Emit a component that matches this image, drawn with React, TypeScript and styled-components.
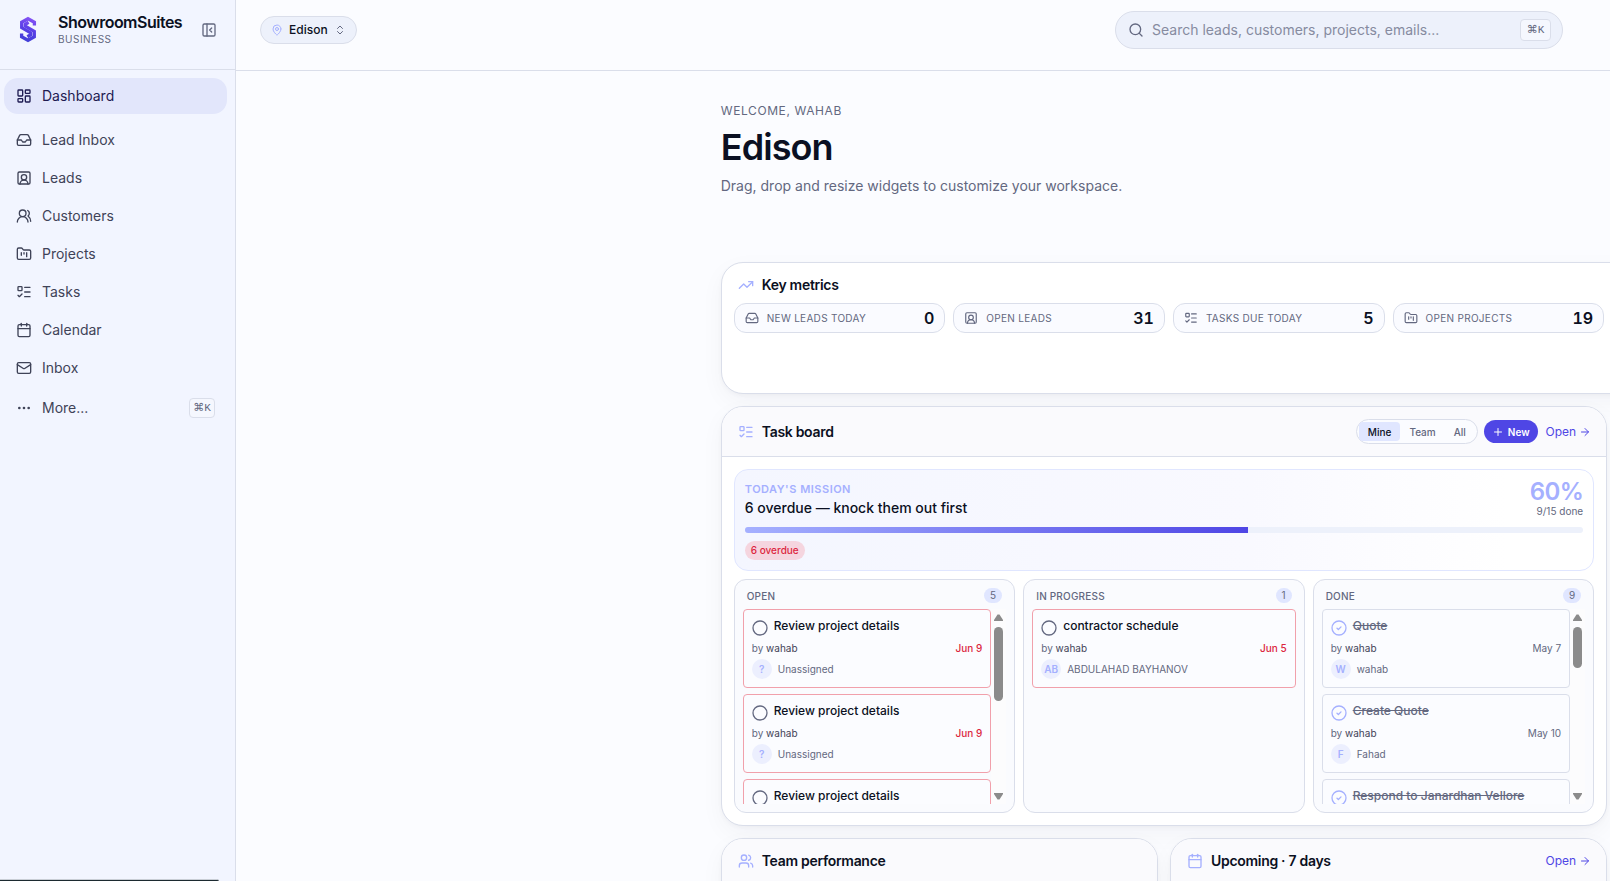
import React from "react";
import styled, { createGlobalStyle, css } from "styled-components";
import {
  ArrowRight,
  Calendar,
  ChevronsUpDown,
  Ellipsis,
  FolderKanban,
  Inbox,
  LayoutDashboard,
  ListTodo,
  Mail,
  MapPin,
  PanelLeftClose,
  Plus,
  Search,
  SquareUserRound,
  TrendingUp,
  Users,
  UsersRound,
  type LucideIcon,
} from "lucide-react";

const color = {
  page: "#fbfcff",
  side: "#f2f5ff",
  line: "#dadeea",
  ink: "#0b1022",
  text: "#3f4358",
  muted: "#636880",
  accent: "#4f46e5",
  soft: "#a5b0ff",
  tint: "#e0e6ff",
  field: "#edf1fb",
  danger: "#dc2640",
};

const GlobalStyle = createGlobalStyle`
  *, *::before, *::after { box-sizing: border-box; }
  body {
    margin: 0;
    background: ${color.page};
    color: ${color.ink};
    font-family: Inter, "Liberation Sans", sans-serif;
    font-size: 14px;
    line-height: 20px;
  }
  button, input { font: inherit; color: inherit; }
  button { padding: 0; border: 0; background: none; cursor: pointer; }
  h1, h2, h3, p, ul { margin: 0; padding: 0; }
  ul { list-style: none; }
  a { color: inherit; text-decoration: none; }
  svg { flex: none; display: block; }
`;

const Shell = styled.div`
  display: flex;
  height: 100vh;
  overflow: hidden;
`;

/* Sidebar */

const Sidebar = styled.aside`
  flex: none;
  width: 236px;
  background: ${color.side};
  border-right: 1px solid ${color.line};
`;

const Brand = styled.div`
  display: flex;
  align-items: flex-start;
  height: 70px;
  padding: 12px 18px 0 19px;
  border-bottom: 1px solid ${color.line};
`;

const LogoBox = styled.div`
  width: 39px;
  padding-top: 4px;
`;

const BrandText = styled.div`
  flex: 1;
`;

const BrandName = styled.div`
  font-size: 16px;
  font-weight: 600;
  letter-spacing: -0.5px;
  line-height: 20px;
`;

const BrandKind = styled.div`
  font-size: 10px;
  letter-spacing: 0.5px;
  line-height: 14px;
  color: ${color.muted};
`;

const CollapseButton = styled.button`
  margin-top: 10px;
  color: ${color.muted};
`;

const NavList = styled.ul`
  display: flex;
  flex-direction: column;
  gap: 2px;
  padding: 8px 8px 0 4px;
`;

const NavRow = styled.li<{ $after?: number }>`
  margin-bottom: ${(p) => p.$after ?? 0}px;
`;

const NavLink = styled.a<{ $active?: boolean }>`
  display: flex;
  align-items: center;
  gap: 10px;
  height: 36px;
  padding: 0 12px;
  border-radius: 14px;
  color: ${color.text};
  ${(p) =>
    p.$active &&
    css`
      background: #e2e6fb;
      color: #1e1b52;
    `}
`;

const NavLabel = styled.span`
  flex: 1;
`;

const Kbd = styled.kbd<{ $wide?: boolean }>`
  display: flex;
  align-items: center;
  justify-content: center;
  width: ${(p) => (p.$wide ? 31 : 26)}px;
  height: ${(p) => (p.$wide ? 22 : 20)}px;
  border: 1px solid ${color.line};
  border-radius: 4px;
  background: #f5f7fe;
  color: ${color.muted};
  font-family: "Liberation Mono", "DejaVu Sans", monospace;
  font-size: 11px;
`;

const StatusBubble = styled.div`
  position: fixed;
  left: 0;
  bottom: 0;
  width: 219px;
  height: 2px;
  border-top: 1px solid #c9ced6;
  border-top-right-radius: 2px;
  background: #1c2a30;
`;

/* Main area */

const Main = styled.main`
  flex: 1;
  min-width: 0;
  overflow: hidden;
`;

const TopBar = styled.header`
  display: flex;
  align-items: center;
  justify-content: space-between;
  padding: 11px 47px 21px 24px;
  border-bottom: 1px solid ${color.line};
`;

const LocationButton = styled.button`
  display: flex;
  align-items: center;
  gap: 6px;
  height: 28px;
  padding: 0 10px;
  border: 1px solid ${color.line};
  border-radius: 14px;
  background: ${color.field};
  font-size: 12px;
  font-weight: 500;
  svg:first-child { color: ${color.soft}; }
  svg:last-child { color: ${color.muted}; }
`;

const SearchBox = styled.label`
  display: flex;
  align-items: center;
  gap: 8px;
  width: 448px;
  height: 38px;
  padding: 0 11px 0 12px;
  border: 1px solid ${color.line};
  border-radius: 19px;
  background: ${color.field};
  color: ${color.muted};
`;

const SearchInput = styled.input`
  flex: 1;
  min-width: 0;
  padding: 0;
  border: 0;
  outline: 0;
  background: none;
  &::placeholder { color: #868ba0; opacity: 1; }
`;

const Workspace = styled.div`
  padding: 31px 0 0 35.28%;
`;

const Content = styled.div`
  width: 150.2%;
`;

const Eyebrow = styled.p`
  font-size: 12px;
  letter-spacing: 0.6px;
  line-height: 18px;
  color: ${color.muted};
`;

const Title = styled.h1`
  margin-top: 5px;
  font-size: 36px;
  font-weight: 600;
  letter-spacing: -0.9px;
  line-height: 44px;
`;

const Subtitle = styled.p`
  margin-top: 7px;
  color: ${color.muted};
`;

const Widgets = styled.div`
  display: grid;
  grid-template-columns: repeat(3, 1fr);
  gap: 12px;
  margin-top: 66px;
`;

const Widget = styled.section<{ $from?: number; $span?: number }>`
  grid-column: ${(p) => p.$from ?? 1} / span ${(p) => p.$span ?? 1};
  overflow: hidden;
  border: 1px solid ${color.line};
  border-radius: 22px;
  background: #fff;
  box-shadow: 0 2px 4px rgba(15, 23, 42, 0.03), 0 8px 24px rgba(15, 23, 42, 0.04);
`;

const MetricsBody = styled.div`
  padding: 12px 12px 60px;
`;

const headerHeight = { plain: 20, compact: 45, tall: 50 };

const WidgetHeader = styled.div<{ $kind: keyof typeof headerHeight }>`
  display: flex;
  align-items: center;
  gap: 8px;
  height: ${(p) => headerHeight[p.$kind]}px;
  ${(p) =>
    p.$kind === "plain"
      ? css`
          padding: 0 4px;
          margin-bottom: 8px;
        `
      : css`
          padding: 0 15px 0 16px;
          border-bottom: 1px solid ${color.line};
          background: #fafafd;
        `}
  > svg { color: ${color.soft}; }
`;

const WidgetTitle = styled.h2`
  flex: 1;
  font-size: 14px;
  font-weight: 600;
  letter-spacing: -0.3px;
  line-height: 20px;
`;

const WidgetBody = styled.div`
  padding: 12px;
`;

const EmptyBody = styled.div`
  height: 300px;
`;

const MetricGrid = styled.div`
  display: grid;
  grid-template-columns: repeat(6, 1fr);
  gap: 8px;
`;

const Metric = styled.a`
  display: flex;
  align-items: center;
  gap: 8px;
  height: 30px;
  padding: 0 10px;
  border: 1px solid ${color.line};
  border-radius: 12px;
  background: #fafbff;
  color: ${color.muted};
`;

const MetricLabel = styled.span`
  flex: 1;
  font-size: 10px;
  letter-spacing: 0.3px;
`;

const MetricValue = styled.span`
  font-size: 16px;
  font-weight: 600;
  font-variant-numeric: tabular-nums;
  color: ${color.ink};
`;

/* Task board */

const Segments = styled.div`
  display: flex;
  align-items: center;
  height: 25px;
  padding: 0 2px;
  border: 1px solid ${color.line};
  border-radius: 13px;
  background: ${color.page};
`;

const Segment = styled.button<{ $active?: boolean }>`
  height: 19px;
  padding: 0 9px;
  border-radius: 4px;
  font-size: 10px;
  font-weight: 500;
  background: ${(p) => (p.$active ? color.tint : "transparent")};
  color: ${(p) => (p.$active ? color.ink : color.muted)};
`;

const NewButton = styled.button`
  display: flex;
  align-items: center;
  gap: 4px;
  height: 23px;
  margin-left: -2px;
  padding: 0 8px;
  border-radius: 12px;
  background: ${color.accent};
  color: #fff;
  font-size: 10px;
  font-weight: 600;
`;

const OpenLink = styled.a`
  display: flex;
  align-items: center;
  gap: 3px;
  font-size: 12px;
  color: ${color.accent};
`;

const Mission = styled.div`
  height: 102px;
  padding: 10px;
  border: 1px solid ${color.tint};
  border-radius: 14px;
  background: linear-gradient(90deg, #f4f6ff, #f9f9ff 60%, #fff 90%);
`;

const MissionTop = styled.div`
  display: flex;
  justify-content: space-between;
`;

const MissionLabel = styled.p`
  font-size: 11px;
  font-weight: 600;
  letter-spacing: 0.5px;
  line-height: 18px;
  color: ${color.soft};
`;

const MissionText = styled.h3`
  font-size: 14px;
  font-weight: 500;
  line-height: 20px;
`;

const MissionScore = styled.div`
  text-align: right;
`;

const Percent = styled.div`
  font-size: 24px;
  font-weight: 600;
  letter-spacing: -0.6px;
  line-height: 24px;
  color: ${color.soft};
`;

const Ratio = styled.div`
  font-size: 10px;
  line-height: 14px;
  color: ${color.muted};
`;

const Track = styled.div`
  height: 6px;
  margin-top: 9px;
  overflow: hidden;
  border-radius: 3px;
  background: ${color.field};
`;

const Fill = styled.div`
  height: 100%;
  background: linear-gradient(90deg, ${color.soft}, ${color.accent});
`;

const OverdueTag = styled.span`
  display: inline-block;
  margin-top: 8px;
  padding: 0 6px;
  border-radius: 10px;
  background: #f5d5df;
  color: ${color.danger};
  font-size: 10px;
  font-weight: 500;
  line-height: 19px;
`;

const Columns = styled.div`
  display: grid;
  grid-template-columns: repeat(3, 1fr);
  gap: 8px;
  margin-top: 8px;
`;

const Column = styled.div`
  min-width: 0;
  height: 234px;
  padding: 8px;
  border: 1px solid ${color.line};
  border-radius: 12px;
  background: #fafbfe;
`;

const ColumnHeader = styled.div`
  display: flex;
  align-items: center;
  justify-content: space-between;
  height: 15px;
  margin-bottom: 6px;
  padding: 0 4px;
  font-size: 10px;
  color: ${color.muted};
`;

const ColumnName = styled.h3`
  font-size: 10px;
  font-weight: 500;
  letter-spacing: 0.2px;
`;

const Count = styled.span`
  min-width: 16px;
  padding: 0 6px;
  border-radius: 8px;
  background: ${color.tint};
  line-height: 15px;
  text-align: center;
`;

const Scroller = styled.div`
  display: flex;
  height: 195px;
  overflow: hidden;
`;

const Cards = styled.ul`
  display: flex;
  flex: 1;
  flex-direction: column;
  gap: 6px;
  min-width: 0;
`;

const Card = styled.li<{ $late: boolean }>`
  flex: none;
  padding: 8px;
  border: 1px solid ${(p) => (p.$late ? "#f1a0ab" : color.line)};
  border-radius: 4px;
  background: #fbfcff;
`;

const CardTop = styled.div`
  display: flex;
  gap: 6px;
  height: 18px;
`;

const CheckButton = styled.button<{ $done: boolean }>`
  height: 16px;
  margin-top: 2px;
  color: ${(p) => (p.$done ? color.soft : color.muted)};
`;

const CardTitle = styled.span<{ $done: boolean }>`
  font-size: 12px;
  font-weight: 500;
  line-height: 16px;
  color: ${(p) => (p.$done ? color.muted : color.ink)};
  text-decoration: ${(p) => (p.$done ? "line-through" : "none")};
`;

const CardMeta = styled.div`
  display: flex;
  justify-content: space-between;
  margin: 5px 0 4px;
  font-size: 10px;
  line-height: 14px;
  color: ${color.muted};
`;

const Author = styled.span`
  color: ${color.text};
`;

const Due = styled.span<{ $late: boolean }>`
  ${(p) =>
    p.$late &&
    css`
      color: ${color.danger};
      font-weight: 500;
    `}
`;

const Assignee = styled.div`
  display: flex;
  align-items: center;
  gap: 6px;
  font-size: 10px;
  color: ${color.muted};
`;

const Avatar = styled.span`
  width: 20px;
  height: 20px;
  border-radius: 50%;
  background: #eceffe;
  color: ${color.soft};
  font-weight: 600;
  text-align: center;
`;

const ScrollRail = styled.div`
  display: flex;
  flex: none;
  flex-direction: column;
  align-items: center;
  gap: 6px;
  width: 15px;
  padding: 5px 0 4px;
  background: #fcfcfd;
`;

const ScrollThumb = styled.div<{ $size: number }>`
  width: 9px;
  height: ${(p) => p.$size}px;
  margin-bottom: auto;
  border-radius: 5px;
  background: #8b8b8b;
`;

const Arrow = ({ down = false }: { down?: boolean }) => (
  <svg width="9" height="7" viewBox="0 0 9 7" fill="#8b8b8b">
    <path d={down ? "M0 0h9v1L5.5 6.5h-2L0 1z" : "M0 7h9V6L5.5.5h-2L0 6z"} />
  </svg>
);

const StatusIcon = ({ done }: { done: boolean }) => (
  <svg width="16" height="16" viewBox="0 0 16 16" fill="none" stroke="currentColor" strokeWidth="1.3" strokeLinecap="round" strokeLinejoin="round">
    <circle cx="8" cy="8" r="7" />
    {done && <path d="M6 8.2l1.4 1.3L10 6.9" />}
  </svg>
);

const Logo = () => (
  <svg width="18" height="27" viewBox="0 0 18 27" fill="none" stroke="url(#logo)" strokeWidth="3.3">
    <defs>
      <linearGradient id="logo" x1="14" y1="1" x2="5" y2="26" gradientUnits="userSpaceOnUse">
        <stop stopColor="#8b55f7" />
        <stop offset="0.5" stopColor="#5a3fe6" />
        <stop offset="1" stopColor="#3f3fd6" />
      </linearGradient>
    </defs>
    <path d="M15.4 9.6V6.2L9 2.7 2.7 6.2v5.4l9 5.3v1.9L8.4 20.7" />
    <path d="M2.6 17.4v3.4L9 24.3l6.3-3.5v-5.4l-9-5.3V8.2L9.6 6.3" />
  </svg>
);

const nav: { label: string; icon: LucideIcon; active?: boolean; after?: number; shortcut?: boolean }[] = [
  { label: "Dashboard", icon: LayoutDashboard, active: true, after: 6 },
  { label: "Lead Inbox", icon: Inbox },
  { label: "Leads", icon: SquareUserRound },
  { label: "Customers", icon: UsersRound },
  { label: "Projects", icon: FolderKanban },
  { label: "Tasks", icon: ListTodo },
  { label: "Calendar", icon: Calendar },
  { label: "Inbox", icon: Mail, after: 2 },
  { label: "More...", icon: Ellipsis, shortcut: true },
];

const metrics: { label: string; value: number; icon: LucideIcon }[] = [
  { label: "NEW LEADS TODAY", value: 0, icon: Inbox },
  { label: "OPEN LEADS", value: 31, icon: SquareUserRound },
  { label: "TASKS DUE TODAY", value: 5, icon: ListTodo },
  { label: "OPEN PROJECTS", value: 19, icon: FolderKanban },
];

type Task = { title: string; due?: string; initials?: string; assignee?: string };
type Lane = { name: string; count: number; late: boolean; done: boolean; thumb?: number; tasks: Task[] };

const review: Task = { title: "Review project details", due: "Jun 9", initials: "?", assignee: "Unassigned" };

const lanes: Lane[] = [
  {
    name: "OPEN",
    count: 5,
    late: true,
    done: false,
    thumb: 74,
    tasks: [review, review, { title: "Review project details" }],
  },
  {
    name: "IN PROGRESS",
    count: 1,
    late: true,
    done: false,
    tasks: [{ title: "contractor schedule", due: "Jun 5", initials: "AB", assignee: "ABDULAHAD BAYHANOV" }],
  },
  {
    name: "DONE",
    count: 9,
    late: false,
    done: true,
    thumb: 41,
    tasks: [
      { title: "Quote", due: "May 7", initials: "W", assignee: "wahab" },
      { title: "Create Quote", due: "May 10", initials: "F", assignee: "Fahad" },
      { title: "Respond to Janardhan Vellore" },
    ],
  },
];

const TaskCard = ({ task, lane }: { task: Task; lane: Lane }) => (
  <Card $late={lane.late}>
    <CardTop>
      <CheckButton $done={lane.done} aria-label={`Toggle ${task.title}`}>
        <StatusIcon done={lane.done} />
      </CheckButton>
      <CardTitle $done={lane.done}>{task.title}</CardTitle>
    </CardTop>
    {task.due && (
      <>
        <CardMeta>
          <span>
            by <Author>wahab</Author>
          </span>
          <Due $late={lane.late}>{task.due}</Due>
        </CardMeta>
        <Assignee>
          <Avatar>{task.initials}</Avatar>
          {task.assignee}
        </Assignee>
      </>
    )}
  </Card>
);

const TaskLane = ({ lane }: { lane: Lane }) => (
  <Column>
    <ColumnHeader>
      <ColumnName>{lane.name}</ColumnName>
      <Count>{lane.count}</Count>
    </ColumnHeader>
    <Scroller>
      <Cards>
        {lane.tasks.map((task, i) => (
          <TaskCard key={i} task={task} lane={lane} />
        ))}
      </Cards>
      {lane.thumb && (
        <ScrollRail aria-hidden>
          <Arrow />
          <ScrollThumb $size={lane.thumb} />
          <Arrow down />
        </ScrollRail>
      )}
    </Scroller>
  </Column>
);

export default function App() {
  return (
    <Shell>
      <GlobalStyle />
      <Sidebar>
        <Brand>
          <LogoBox>
            <Logo />
          </LogoBox>
          <BrandText>
            <BrandName>ShowroomSuites</BrandName>
            <BrandKind>BUSINESS</BrandKind>
          </BrandText>
          <CollapseButton aria-label="Collapse sidebar">
            <PanelLeftClose size={16} />
          </CollapseButton>
        </Brand>
        <nav>
          <NavList>
            {nav.map(({ label, icon: Icon, active, after, shortcut }) => (
              <NavRow key={label} $after={after}>
                <NavLink href="#" $active={active}>
                  <Icon size={16} />
                  <NavLabel>{label}</NavLabel>
                  {shortcut && <Kbd>⌘K</Kbd>}
                </NavLink>
              </NavRow>
            ))}
          </NavList>
        </nav>
      </Sidebar>

      <Main>
        <TopBar>
          <LocationButton>
            <MapPin size={12} />
            Edison
            <ChevronsUpDown size={12} />
          </LocationButton>
          <SearchBox>
            <Search size={16} />
            <SearchInput type="text" aria-label="Search" placeholder="Search leads, customers, projects, emails..." />
            <Kbd $wide>⌘K</Kbd>
          </SearchBox>
        </TopBar>

        <Workspace>
          <Content>
            <Eyebrow>WELCOME, WAHAB</Eyebrow>
            <Title>Edison</Title>
            <Subtitle>Drag, drop and resize widgets to customize your workspace.</Subtitle>

            <Widgets>
              <Widget $span={3}>
                <MetricsBody>
                  <WidgetHeader $kind="plain">
                    <TrendingUp size={16} />
                    <WidgetTitle>Key metrics</WidgetTitle>
                  </WidgetHeader>
                  <MetricGrid>
                    {metrics.map(({ label, value, icon: Icon }) => (
                      <Metric key={label} href="#">
                        <Icon size={14} />
                        <MetricLabel>{label}</MetricLabel>
                        <MetricValue>{value}</MetricValue>
                      </Metric>
                    ))}
                  </MetricGrid>
                </MetricsBody>
              </Widget>

              <Widget $span={2}>
                <WidgetHeader $kind="tall">
                  <ListTodo size={16} />
                  <WidgetTitle>Task board</WidgetTitle>
                  <Segments>
                    <Segment $active>Mine</Segment>
                    <Segment>Team</Segment>
                    <Segment>All</Segment>
                  </Segments>
                  <NewButton>
                    <Plus size={12} />
                    New
                  </NewButton>
                  <OpenLink href="#">
                    Open
                    <ArrowRight size={12} />
                  </OpenLink>
                </WidgetHeader>
                <WidgetBody>
                  <Mission>
                    <MissionTop>
                      <div>
                        <MissionLabel>TODAY'S MISSION</MissionLabel>
                        <MissionText>6 overdue — knock them out first</MissionText>
                      </div>
                      <MissionScore>
                        <Percent>60%</Percent>
                        <Ratio>9/15 done</Ratio>
                      </MissionScore>
                    </MissionTop>
                    <Track>
                      <Fill style={{ width: `${(9 / 15) * 100}%` }} />
                    </Track>
                    <OverdueTag>6 overdue</OverdueTag>
                  </Mission>
                  <Columns>
                    {lanes.map((lane) => (
                      <TaskLane key={lane.name} lane={lane} />
                    ))}
                  </Columns>
                </WidgetBody>
              </Widget>

              <Widget>
                <WidgetHeader $kind="compact">
                  <Users size={16} />
                  <WidgetTitle>Team performance</WidgetTitle>
                </WidgetHeader>
                <EmptyBody />
              </Widget>
              <Widget $from={2}>
                <WidgetHeader $kind="compact">
                  <Calendar size={16} />
                  <WidgetTitle>Upcoming · 7 days</WidgetTitle>
                  <OpenLink href="#">
                    Open
                    <ArrowRight size={12} />
                  </OpenLink>
                </WidgetHeader>
                <EmptyBody />
              </Widget>
            </Widgets>
          </Content>
        </Workspace>
      </Main>
      <StatusBubble />
    </Shell>
  );
}
